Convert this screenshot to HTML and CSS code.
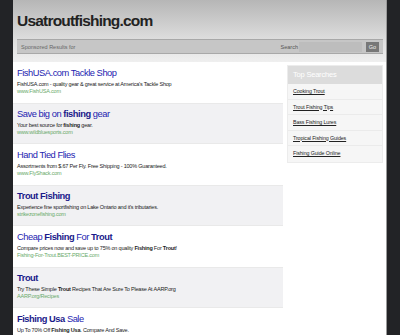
FILE: index.html
```html
<!DOCTYPE html>
<html lang="en">
<head>
    <meta charset="UTF-8">
    <title>Usatroutfishing.com</title>
    <link rel="stylesheet" href="styles.css">
</head>
<body>
    <div class="page">
        <div class="header">
            <h1>Usatroutfishing.com</h1>
            <div class="searchbar">
                <span class="sponsored">Sponsored Results for</span>
                <form class="search">
                    <label for="q">Search</label>
                    <input type="text" id="q" name="q">
                    <button type="submit">Go</button>
                </form>
            </div>
        </div>
        <div class="content">
            <div class="ads">
                <div class="ad">
                    <a class="title" href="#">FishUSA.com Tackle Shop</a>
                    <p class="desc">FishUSA.com - quality gear &amp; great service at America's Tackle Shop</p>
                    <p class="url">www.FishUSA.com</p>
                </div>
                <div class="ad alt">
                    <a class="title" href="#">Save big on <b>fishing</b> gear</a>
                    <p class="desc">Your best source for <b>fishing</b> gear.</p>
                    <p class="url">www.wildbluesports.com</p>
                </div>
                <div class="ad">
                    <a class="title" href="#">Hand Tied Flies</a>
                    <p class="desc">Assortments from $.67 Per Fly. Free Shipping - 100% Guaranteed.</p>
                    <p class="url">www.FlyShack.com</p>
                </div>
                <div class="ad alt">
                    <a class="title" href="#"><b>Trout Fishing</b></a>
                    <p class="desc">Experience fine sportfishing on Lake Ontario and it's tributaries.</p>
                    <p class="url">strikezonefishing.com</p>
                </div>
                <div class="ad">
                    <a class="title" href="#">Cheap <b>Fishing</b> For <b>Trout</b></a>
                    <p class="desc">Compare prices now and save up to 75% on quality <b>Fishing</b> For <b>Trout</b>!</p>
                    <p class="url">Fishing-For-Trout.BEST-PRICE.com</p>
                </div>
                <div class="ad alt">
                    <a class="title" href="#"><b>Trout</b></a>
                    <p class="desc">Try These Simple <b>Trout</b> Recipes That Are Sure To Please At AARP.org</p>
                    <p class="url">AARP.org/Recipes</p>
                </div>
                <div class="ad">
                    <a class="title" href="#"><b>Fishing Usa</b> Sale</a>
                    <p class="desc">Up To 70% Off <b>Fishing Usa</b>. Compare And Save.</p>
                    <p class="url">www.Shopping.com</p>
                </div>
            </div>
            <div class="sidebar">
                <h2>Top Searches</h2>
                <ul>
                    <li><a href="#">Cooking Trout</a></li>
                    <li><a href="#">Trout Fishing Tips</a></li>
                    <li><a href="#">Bass Fishing Lures</a></li>
                    <li><a href="#">Tropical Fishing Guides</a></li>
                    <li><a href="#">Fishing Guide Online</a></li>
                </ul>
            </div>
        </div>
    </div>
</body>
</html>
```

FILE: styles.css
```css
body {
    margin: 0;
    background-color: #222326;
    font-family: "Liberation Sans", Arial, sans-serif;
    color: #333;
}

.page {
    width: 373px;
    height: 335px;
    margin-left: 13px;
    background: #fff;
    border-right: 1px solid #999;
    overflow: hidden;
}

.header {
    background: linear-gradient(#b6b6b6, #dedede 40px, #efefef);
    padding-bottom: 8px;
}

h1 {
    margin: 0;
    padding: 10px 0 0 4px;
    height: 31px;
    box-sizing: border-box;
    font-size: 15.5px;
    line-height: 21px;
    letter-spacing: -0.8px;
    font-weight: bold;
    color: #222;
}

.searchbar {
    display: flex;
    align-items: center;
    justify-content: space-between;
    margin: 8px 3px 0 4px;
    height: 13px;
    padding: 0 4px;
    background: #c6c6c6;
    border-top: 1px solid #a8a8a8;
    border-bottom: 1px solid #a8a8a8;
}

.sponsored {
    font-size: 5.5px;
    color: #666;
}

.search {
    display: flex;
    align-items: center;
}

.search label {
    font-size: 5.5px;
    color: #555;
    margin-right: 1px;
}

.search input {
    width: 63px;
    height: 10px;
    padding: 0;
    border: none;
    background: #bdbdbd;
}

.search button {
    margin-left: 4px;
    width: 13px;
    height: 10px;
    padding: 0;
    border: none;
    background: #777;
    color: #eee;
    font-family: inherit;
    font-size: 5.5px;
}

.content {
    display: flex;
    align-items: flex-start;
}

.ads {
    width: 270px;
}

.ad {
    height: 41px;
    box-sizing: border-box;
    padding: 5px 0 0 4px;
}

.ad.alt {
    background: #f1f1f3;
    border-top: 1px solid #e9e9e9;
    border-bottom: 1px solid #e9e9e9;
    padding-top: 4px;
}

.ad .title {
    display: block;
    height: 13px;
    font-size: 9.3px;
    line-height: 13px;
    letter-spacing: -0.45px;
    color: #2323b0;
    text-decoration: none;
}

.ad .title b {
    color: #1a1a8a;
}

.ad p {
    margin: 0;
    font-size: 5.5px;
    letter-spacing: -0.2px;
}

.desc {
    line-height: 8px;
    color: #222;
}

.url {
    line-height: 7px;
    color: #6aaa6a;
}

.sidebar {
    width: 96px;
    margin: 3px 0 0 4px;
    background: #f6f6f6;
    border: 1px solid #ececec;
    box-sizing: border-box;
}

.sidebar h2 {
    margin: 0;
    height: 18px;
    padding-left: 5px;
    background: #dcdcdc;
    color: #fff;
    font-size: 7.5px;
    font-weight: normal;
    line-height: 18px;
    letter-spacing: -0.2px;
}

.sidebar ul {
    list-style: none;
    margin: 0;
    padding: 0;
}

.sidebar li {
    height: 15.5px;
    font-size: 5.3px;
    line-height: 15px;
    padding-left: 5px;
    border-bottom: 1px solid #ebebeb;
    box-sizing: border-box;
}

.sidebar li:last-child {
    border-bottom: none;
}

.sidebar a {
    color: #222;
    letter-spacing: -0.1px;
}
```
